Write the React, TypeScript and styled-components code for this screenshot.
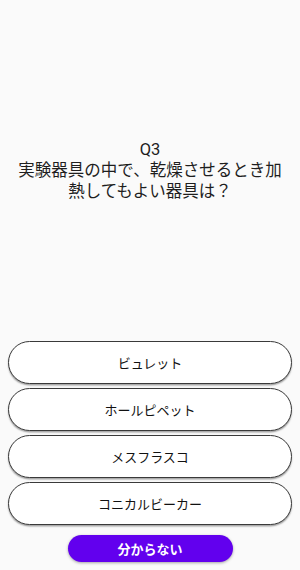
import styled, { createGlobalStyle } from 'styled-components';

const GlobalStyle = createGlobalStyle`
    html, body {
        margin: 0;
        padding: 0;
        background: #fafafa;
    }
    body {
        font-family: Roboto, "Noto Sans CJK JP", sans-serif;
    }
`;

const choices = ['ビュレット', 'ホールピペット', 'メスフラスコ', 'コニカルビーカー'];

export default function App() {
    return (
        <>
            <GlobalStyle />
            <Screen>
                <QuestionArea>
                    <Question>
                        Q3
                        <br />
                        実験器具の中で、乾燥させるとき加熱してもよい器具は？
                    </Question>
                </QuestionArea>

                <Choices>
                    {choices.map((c) => (
                        <Choice key={c}>{c}</Choice>
                    ))}
                </Choices>

                <SkipRow>
                    <SkipButton>分からない</SkipButton>
                </SkipRow>
            </Screen>
        </>
    );
}

const Screen = styled.div`
    height: 570px;
    display: flex;
    flex-direction: column;
    background: #fafafa;
`;

const QuestionArea = styled.div`
    flex: 1;
    display: flex;
    align-items: center;
    justify-content: center;
    padding: 0 16px;
`;

const Question = styled.p`
    margin: 0;
    text-align: center;
    font-size: 16.5px;
    line-height: 21px;
    color: #1e1e1e;
`;

const Choices = styled.div`
    display: flex;
    flex-direction: column;
    gap: 4px;
    padding: 0 8px;
`;

const Choice = styled.button`
    height: 43px;
    width: 100%;
    border: 1px solid #3a3a3a;
    border-radius: 22px;
    background: #fff;
    box-shadow: 0 1.5px 1.5px rgba(0, 0, 0, 0.35);
    font-family: Roboto, "Noto Sans CJK JP", sans-serif;
    font-size: 13px;
    color: #111;
    padding: 0;
`;

const SkipRow = styled.div`
    display: flex;
    justify-content: center;
    padding: 10px 0 8px;
`;

const SkipButton = styled.button`
    width: 165px;
    height: 27px;
    border: none;
    border-radius: 14px;
    background: #6200ee;
    box-shadow: 0 1px 3px rgba(0, 0, 0, 0.35);
    color: #fff;
    font-family: Roboto, "Noto Sans CJK JP", sans-serif;
    font-size: 13px;
    font-weight: 700;
    padding: 0;
`;
